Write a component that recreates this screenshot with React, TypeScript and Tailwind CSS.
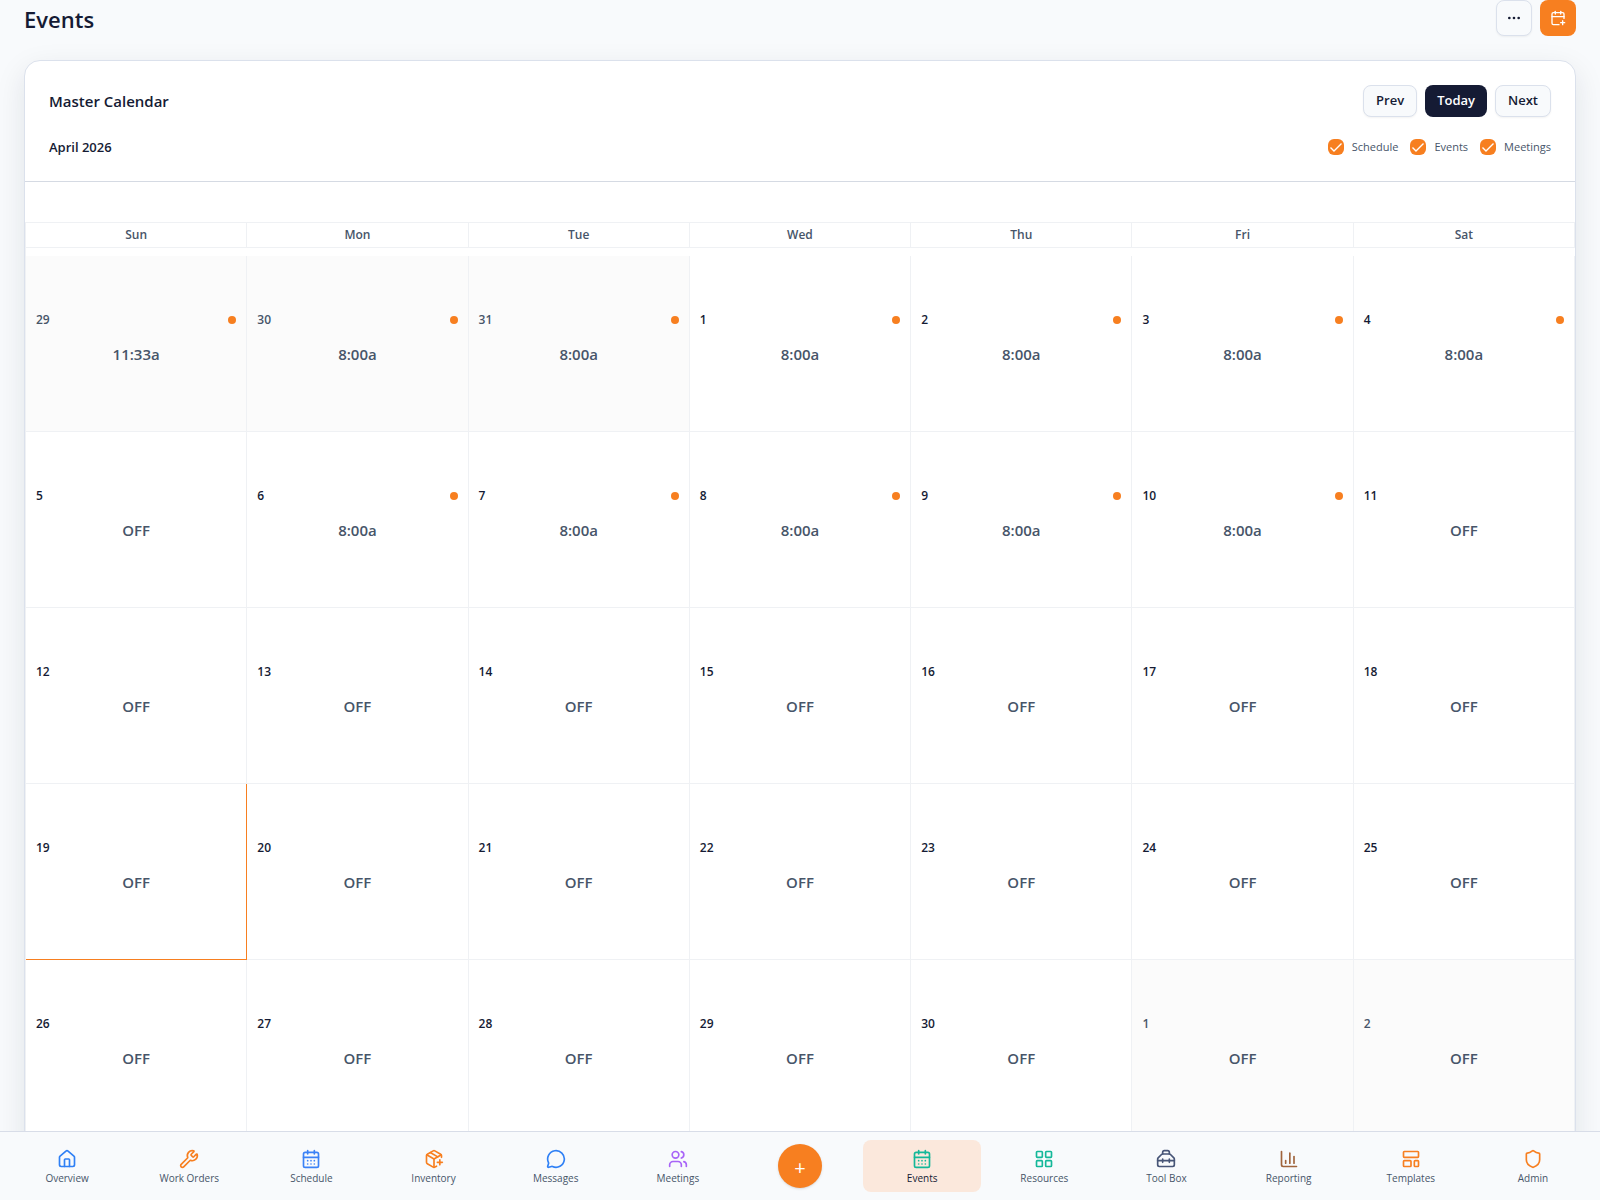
import React from "react";
import {
  House,
  Wrench,
  CalendarDays,
  PackagePlus,
  MessageCircle,
  Users,
  LayoutGrid,
  LayoutTemplate,
  Shield,
  CalendarPlus,
  Ellipsis,
  ChartColumn,
} from "lucide-react";

type Day = { day: number; label: string; dot?: boolean; outside?: boolean; today?: boolean };

const weekdays = ["Sun", "Mon", "Tue", "Wed", "Thu", "Fri", "Sat"];

const off = (day: number, extra: Partial<Day> = {}): Day => ({ day, label: "OFF", ...extra });
const shift = (day: number, extra: Partial<Day> = {}): Day => ({ day, label: "8:00a", dot: true, ...extra });

const weeks: Day[][] = [
  [
    { day: 29, label: "11:33a", dot: true, outside: true },
    shift(30, { outside: true }),
    shift(31, { outside: true }),
    shift(1),
    shift(2),
    shift(3),
    shift(4),
  ],
  [off(5), shift(6), shift(7), shift(8), shift(9), shift(10), off(11)],
  [off(12), off(13), off(14), off(15), off(16), off(17), off(18)],
  [off(19, { today: true }), off(20), off(21), off(22), off(23), off(24), off(25)],
  [off(26), off(27), off(28), off(29), off(30), off(1, { outside: true }), off(2, { outside: true })],
];

function Toolbox({ className }: { className?: string }) {
  return (
    <svg
      viewBox="0 0 24 24"
      fill="none"
      stroke="currentColor"
      strokeWidth="2"
      strokeLinecap="round"
      strokeLinejoin="round"
      className={className}
      aria-hidden="true"
    >
      <path d="M16 12v4M8 12v4M2 14h20" />
      <path d="M16 6a2 2 0 0 1 1.414.586l4 4A2 2 0 0 1 22 12v7a2 2 0 0 1-2 2H4a2 2 0 0 1-2-2v-7a2 2 0 0 1 .586-1.414l4-4A2 2 0 0 1 8 6z" />
      <path d="M16 6V4a2 2 0 0 0-2-2h-4a2 2 0 0 0-2 2v2" />
    </svg>
  );
}

type NavEntry = { name: string; Icon: React.ElementType; color: string; active?: boolean };

const leftNav: NavEntry[] = [
  { name: "Overview", Icon: House, color: "text-[#2f80f5]" },
  { name: "Work Orders", Icon: Wrench, color: "text-[#f77f20]" },
  { name: "Schedule", Icon: CalendarDays, color: "text-[#3b82f6]" },
  { name: "Inventory", Icon: PackagePlus, color: "text-[#f77f20]" },
  { name: "Messages", Icon: MessageCircle, color: "text-[#2f80f5]" },
  { name: "Meetings", Icon: Users, color: "text-[#a864f7]" },
];
const rightNav: NavEntry[] = [
  { name: "Events", Icon: CalendarDays, color: "text-[#14b899]", active: true },
  { name: "Resources", Icon: LayoutGrid, color: "text-[#14b899]" },
  { name: "Tool Box", Icon: Toolbox, color: "text-[#475577]" },
  { name: "Reporting", Icon: ChartColumn, color: "text-[#a0643c]" },
  { name: "Templates", Icon: LayoutTemplate, color: "text-[#f77f20]" },
  { name: "Admin", Icon: Shield, color: "text-[#f77f20]" },
];

function NavItem({ name, Icon, color, active }: NavEntry) {
  return (
    <a
      href="#"
      aria-current={active ? "page" : undefined}
      className={`flex h-[52px] min-w-0 flex-1 flex-col items-center justify-center gap-1 rounded-lg text-[10px] leading-[10px] ${
        active ? "bg-[#fbe8dc] text-[#151b34]" : "text-[#475569]"
      }`}
    >
      <Icon className={`size-5 shrink-0 ${color}`} />
      <span className="whitespace-nowrap">{name}</span>
    </a>
  );
}

function Filter({ label }: { label: string }) {
  return (
    <label className="flex items-center gap-2 text-[11px] leading-[18px] text-[#475569]">
      <span className="relative flex size-4">
        <input type="checkbox" defaultChecked className="peer size-4 appearance-none rounded-[6px] bg-white checked:bg-[#f77f20]" />
        <svg
          viewBox="0 0 16 16"
          fill="none"
          stroke="white"
          strokeWidth="1.4"
          className="pointer-events-none absolute inset-0 hidden size-4 peer-checked:block"
          aria-hidden="true"
        >
          <path d="M2.500 8.500 6 12l7.500-7.500" />
        </svg>
      </span>
      {label}
    </label>
  );
}

function DayCell({ day, label, dot, outside, today }: Day) {
  return (
    <td
      className={`h-44 border-r border-b p-0 align-top ${
        today ? "border-r-[#f77f20] border-b-[#f77f20]" : "border-r-[#eff1f4] border-b-[#eff1f4]"
      } ${outside ? "bg-[#fbfbfb]" : ""}`}
    >
      <div className="flex items-center justify-between px-2.5 pt-14">
        <span className={`text-xs font-semibold ${outside ? "text-[#475569]" : "text-[#151b34]"}`}>{day}</span>
        {dot && <span className="size-2 rounded-full bg-[#f77f20]" />}
      </div>
      <div className="pt-4 text-center text-[15px] leading-5 font-semibold text-[#475569]">{label}</div>
    </td>
  );
}

const outlineButton = "border border-[#dbe1ec] bg-[#f8fafc] text-[#151b34] shadow-xs";

export default function App() {
  return (
    <div className="flex h-screen flex-col bg-[#f8fafc] font-['Open_Sans',sans-serif] text-[#151b34]">
      <main className="min-h-0 flex-1 overflow-y-auto px-6 [scrollbar-width:none]">
        <header className="flex items-start justify-between">
          <h1 className="text-[22px] leading-[38px] font-semibold">Events</h1>
          <div className="flex gap-2">
            <button aria-label="More" className={`flex size-9 items-center justify-center rounded-lg ${outlineButton}`}>
              <Ellipsis className="size-4" />
            </button>
            <button aria-label="Add event" className="flex size-9 items-center justify-center rounded-lg bg-[#f77f20] text-white">
              <CalendarPlus className="size-4" />
            </button>
          </div>
        </header>

        <section className="mt-[22px] rounded-2xl border border-[#dbe1ec] bg-white pb-12 shadow-[0_10px_30px_rgba(21,27,52,0.10)]">
          <div className="border-b border-[#d5dae3] p-6">
            <div className="flex h-8 items-center justify-between">
              <h2 className="text-[15px] font-semibold">Master Calendar</h2>
              <div className="flex gap-2 text-[13px] font-semibold">
                <button className={`h-8 rounded-lg px-3 ${outlineButton}`}>Prev</button>
                <button className="h-8 rounded-lg bg-[#151b34] px-3 text-white">Today</button>
                <button className={`h-8 rounded-lg px-3 ${outlineButton}`}>Next</button>
              </div>
            </div>
            <div className="mt-5 flex h-5 items-center justify-between">
              <p className="text-[13px] leading-[22px] font-semibold">April 2026</p>
              <div className="flex gap-3">
                <Filter label="Schedule" />
                <Filter label="Events" />
                <Filter label="Meetings" />
              </div>
            </div>
          </div>

          <table className="mt-10 w-full table-fixed border-separate border-spacing-0 border-l border-[#eff1f4]">
            <thead>
              <tr>
                {weekdays.map((d) => (
                  <th
                    key={d}
                    scope="col"
                    className="h-[26px] border-y border-r border-[#eff1f4] p-0 text-xs font-semibold text-[#475569]"
                  >
                    {d}
                  </th>
                ))}
              </tr>
            </thead>
            <tbody className="before:block before:h-2 before:content-['']">
              {weeks.map((week, i) => (
                <tr key={i}>
                  {week.map((d) => (
                    <DayCell key={d.day} {...d} />
                  ))}
                </tr>
              ))}
            </tbody>
          </table>
        </section>
      </main>

      <nav aria-label="Main" className="relative flex items-start gap-1 border-t border-[#d8dde8] bg-[#f8fafc] px-2 pt-2 pb-2">
        {leftNav.map((item) => (
          <NavItem key={item.name} {...item} />
        ))}
        <div className="flex h-[52px] flex-1 items-center justify-center">
          <button
            aria-label="Create"
            className="flex size-11 items-center justify-center rounded-full bg-[#f77f20] pt-1 text-xl text-white shadow-sm"
          >
            +
          </button>
        </div>
        {rightNav.map((item) => (
          <NavItem key={item.name} {...item} />
        ))}
      </nav>
    </div>
  );
}
